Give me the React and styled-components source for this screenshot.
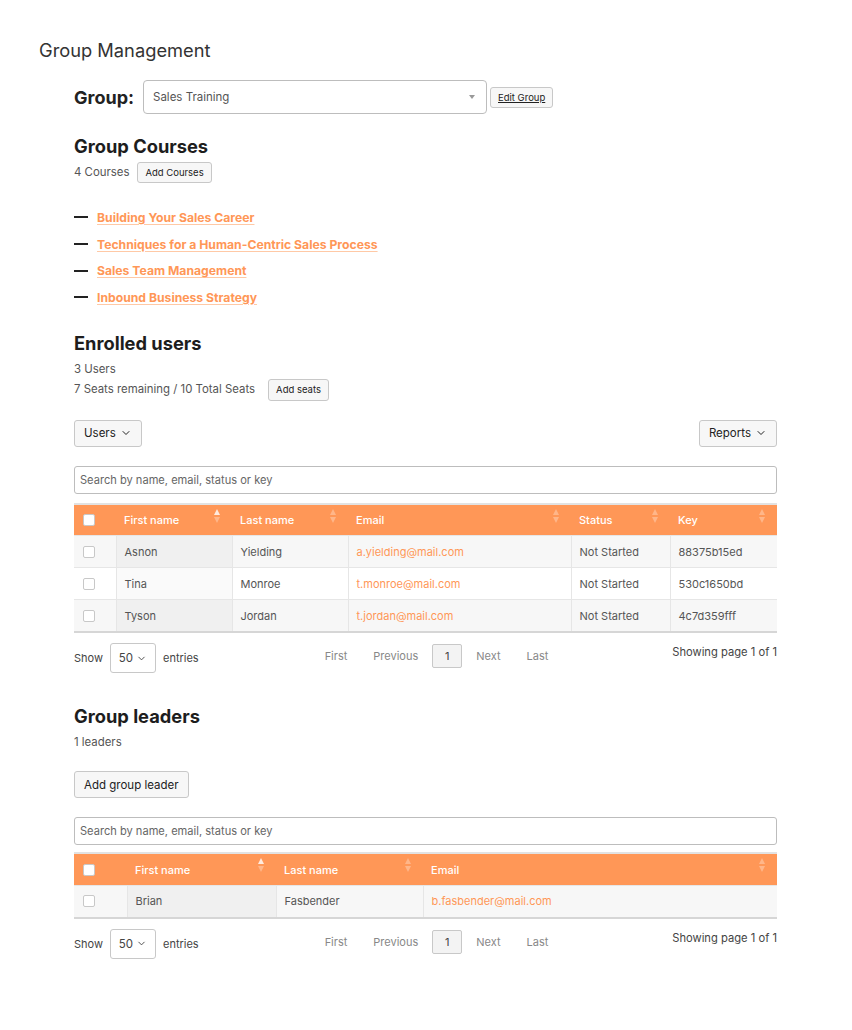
import styled, { createGlobalStyle, css } from 'styled-components'
import { ChevronDown } from 'lucide-react'

const orange = '#ff9757'

const courses = [
  'Building Your Sales Career',
  'Techniques for a Human-Centric Sales Process',
  'Sales Team Management',
  'Inbound Business Strategy'
]

const userCols = [
  { key: 'first', label: 'First name', width: 116, sorted: true },
  { key: 'last', label: 'Last name', width: 116 },
  { key: 'email', label: 'Email', width: 223 },
  { key: 'status', label: 'Status', width: 99 },
  { key: 'key', label: 'Key', width: 107 }
]

const users = [
  { first: 'Asnon', last: 'Yielding', email: 'a.yielding@mail.com', status: 'Not Started', key: '88375b15ed' },
  { first: 'Tina', last: 'Monroe', email: 't.monroe@mail.com', status: 'Not Started', key: '530c1650bd' },
  { first: 'Tyson', last: 'Jordan', email: 't.jordan@mail.com', status: 'Not Started', key: '4c7d359fff' }
]

const leaderCols = [
  { key: 'first', label: 'First name', width: 149, sorted: true },
  { key: 'last', label: 'Last name', width: 147 },
  { key: 'email', label: 'Email', width: 354 }
]

const leaders = [
  { first: 'Brian', last: 'Fasbender', email: 'b.fasbender@mail.com' }
]

const GlobalStyle = createGlobalStyle`
  body {
    margin: 0;
    background: #fff;
    font-family: Inter, "Noto Sans", sans-serif;
    color: #222;
  }
`

const Page = styled.div`
  padding: 38px 0 60px 39px;
`

const Title = styled.h1`
  margin: 0;
  font-size: 18.3px;
  line-height: 24px;
  font-weight: 400;
  color: #333;
`

const Main = styled.div`
  width: 703px;
  margin: 18px 0 0 35px;
  display: flex;
  flex-direction: column;
`

const Row = styled.div`
  display: flex;
  align-items: center;
  gap: ${p => p.$gap || 0}px;
  margin-top: ${p => p.$mt || 0}px;
  ${p => p.$between && css`justify-content: space-between;`}
`

const GroupLabel = styled.span`
  font-size: 18px;
  font-weight: 700;
  margin-right: 6px;
`

const GroupSelect = styled.div`
  width: 344px;
  height: 34px;
  box-sizing: border-box;
  border: 1px solid #bdbdbd;
  border-radius: 4px;
  display: flex;
  align-items: center;
  justify-content: space-between;
  padding: 0 9px;
  font-size: 11.5px;
  color: #555;
  &::after {
    content: '';
    border-left: 3px solid transparent;
    border-right: 3px solid transparent;
    border-top: 4px solid #999;
    margin-right: 2px;
  }
`

const Heading = styled.h2`
  margin: ${p => p.$mt}px 0 0;
  font-size: 18.3px;
  line-height: 24px;
  font-weight: 700;
  color: #1d1d1d;
`

const Meta = styled.span`
  font-size: 11.4px;
  line-height: 19px;
  color: #555;
`

const Button = styled.button`
  font-family: inherit;
  background: #f7f7f7;
  border: 1px solid #c8c8c8;
  border-radius: 3px;
  color: #222;
  cursor: pointer;
  display: inline-flex;
  align-items: center;
  gap: 4px;
  padding: 0 ${p => p.$px || 7}px;
  height: ${p => p.$h || 21}px;
  font-size: ${p => p.$fs || 9.5}px;
  ${p => p.$underline && css`text-decoration: underline;`}
`

const CourseList = styled.ul`
  list-style: none;
  margin: 21px 0 0;
  padding: 0;
`

const CourseItem = styled.li`
  height: 26.7px;
  display: flex;
  align-items: center;
  &::before {
    content: '';
    width: 14px;
    height: 2px;
    background: #222;
    margin-right: 9px;
  }
`

const CourseLink = styled.a`
  font-size: 12.2px;
  font-weight: 700;
  color: ${orange};
  text-decoration: underline;
  text-decoration-color: #ffc9a6;
  text-underline-offset: 2px;
`

const Search = styled.input`
  margin-top: ${p => p.$mt}px;
  width: 100%;
  height: 28px;
  box-sizing: border-box;
  border: 1px solid #bdbdbd;
  border-radius: 3px;
  padding: 0 5px;
  font-family: inherit;
  font-size: 11.1px;
  &::placeholder {
    color: #666;
  }
`

const Table = styled.table`
  margin-top: ${p => p.$mt}px;
  border-collapse: collapse;
  table-layout: fixed;
  width: 100%;
  font-size: 11px;
  border-bottom: 2px solid #d6d6d6;
`

const Th = styled.th`
  position: relative;
  background: ${orange};
  color: #fff;
  font-weight: 500;
  text-align: left;
  height: 32px;
  padding: 0 8px;
  border-top: 2px solid #e2e2e2;
  box-sizing: border-box;
`

const Td = styled.td`
  height: 31px;
  padding: 0 8px;
  color: ${p => (p.$link ? orange : '#555')};
  border-top: 1px solid #e6e6e6;
  border-left: 1px solid #e6e6e6;
  background: ${p => (p.$sorted ? (p.$odd ? '#f0f0f0' : '#fafafa') : p.$odd ? '#f7f7f7' : '#fff')};
  &:first-child {
    border-left: none;
  }
`

const Check = styled.span`
  display: block;
  width: 12px;
  height: 12px;
  box-sizing: border-box;
  border: 1px solid #c8c8c8;
  border-radius: 2px;
  background: #fff;
  margin-left: 1px;
`

const SortIcon = styled.svg`
  position: absolute;
  top: 4px;
  right: 12px;
`

const Footer = styled.div`
  margin-top: 10px;
  display: grid;
  grid-template-columns: 1fr auto 1fr;
  align-items: start;
  font-size: 11px;
  color: #444;
`

const Entries = styled.div`
  display: flex;
  align-items: center;
  gap: 7px;
`

const PageSelect = styled.div`
  width: 46px;
  height: 30px;
  box-sizing: border-box;
  border: 1px solid #c8c8c8;
  border-radius: 3px;
  display: flex;
  align-items: center;
  justify-content: center;
  gap: 3px;
  font-size: 11.5px;
  color: #444;
`

const Pager = styled.div`
  display: flex;
  align-items: center;
  gap: 14px;
  color: #888;
  padding-top: 1px;
  margin-left: 22px;
`

const PagerLink = styled.span`
  ${p => p.$edge === 'start' && css`margin-right: 12px;`}
  ${p => p.$edge === 'end' && css`margin-left: 12px;`}
`

const PageNum = styled.span`
  width: 30px;
  height: 24px;
  box-sizing: border-box;
  border: 1px solid #c8c8c8;
  border-radius: 2px;
  background: #f3f3f3;
  color: #444;
  display: flex;
  align-items: center;
  justify-content: center;
`

const PageInfo = styled.span`
  justify-self: end;
  margin-top: 2px;
  font-size: 11.2px;
`

const Sort = ({ active }) => (
  <SortIcon width="6" height="16" viewBox="0 0 6 16">
    <path d="M3 0 L6 6 H0 Z" fill={active ? 'rgba(255,255,255,0.8)' : 'rgba(255,255,255,0.3)'} />
    <path d="M3 14 L6 8 H0 Z" fill="rgba(255,255,255,0.3)" />
  </SortIcon>
)

const DataTable = ({ cols, rows, checkWidth, mt }) => (
  <Table $mt={mt}>
    <colgroup>
      <col style={{ width: checkWidth }} />
      {cols.map(c => <col key={c.key} style={{ width: c.width }} />)}
    </colgroup>
    <thead>
      <tr>
        <Th><Check /></Th>
        {cols.map(c => (
          <Th key={c.key}>
            {c.label}
            <Sort active={c.sorted} />
          </Th>
        ))}
      </tr>
    </thead>
    <tbody>
      {rows.map((r, i) => (
        <tr key={i}>
          <Td $odd={i % 2 === 0}><Check /></Td>
          {cols.map(c => (
            <Td key={c.key} $odd={i % 2 === 0} $sorted={c.sorted} $link={c.key === 'email'}>
              {r[c.key]}
            </Td>
          ))}
        </tr>
      ))}
    </tbody>
  </Table>
)

const TableFooter = () => (
  <Footer>
    <Entries>
      Show
      <PageSelect>50 <ChevronDown size={11} /></PageSelect>
      entries
    </Entries>
    <Pager>
      <PagerLink $edge="start">First</PagerLink>
      <PagerLink>Previous</PagerLink>
      <PageNum>1</PageNum>
      <PagerLink>Next</PagerLink>
      <PagerLink $edge="end">Last</PagerLink>
    </Pager>
    <PageInfo>Showing page 1 of 1</PageInfo>
  </Footer>
)

const App = () => (
  <Page>
    <GlobalStyle />
    <Title>Group Management</Title>
    <Main>
      <Row $gap={3}>
        <GroupLabel>Group:</GroupLabel>
        <GroupSelect>Sales Training</GroupSelect>
        <Button $underline $h={21}>Edit Group</Button>
      </Row>

      <Heading $mt={20}>Group Courses</Heading>
      <Row $gap={8} $mt={4}>
        <Meta>4 Courses</Meta>
        <Button>Add Courses</Button>
      </Row>
      <CourseList>
        {courses.map(c => (
          <CourseItem key={c}><CourseLink href="#">{c}</CourseLink></CourseItem>
        ))}
      </CourseList>

      <Heading $mt={20}>Enrolled users</Heading>
      <Row $mt={5}><Meta>3 Users</Meta></Row>
      <Row $gap={13}>
        <Meta>7 Seats remaining / 10 Total Seats</Meta>
        <Button $h={22}>Add seats</Button>
      </Row>

      <Row $between $mt={19}>
        <Button $h={27} $fs={11.5} $px={9}>Users <ChevronDown size={12} /></Button>
        <Button $h={27} $fs={11.5} $px={9}>Reports <ChevronDown size={12} /></Button>
      </Row>
      <Search $mt={19} placeholder="Search by name, email, status or key" />
      <DataTable cols={userCols} rows={users} checkWidth={42} mt={9} />
      <TableFooter />

      <Heading $mt={31}>Group leaders</Heading>
      <Row $mt={5}><Meta>1 leaders</Meta></Row>
      <Row $mt={19}>
        <Button $h={27} $fs={11.5} $px={9}>Add group leader</Button>
      </Row>
      <Search $mt={19} placeholder="Search by name, email, status or key" />
      <DataTable cols={leaderCols} rows={leaders} checkWidth={53} mt={7} />
      <TableFooter />
    </Main>
  </Page>
)

export default App
